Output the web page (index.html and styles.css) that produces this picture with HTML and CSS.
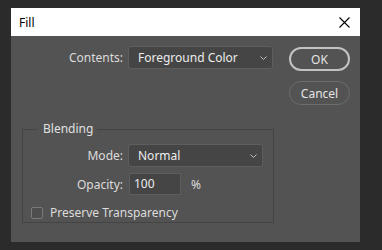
FILE: index.html
```html
<!DOCTYPE html>
<html lang="en">

<head>
    <meta charset="UTF-8">
    <meta name="viewport" content="width=device-width, initial-scale=1.0">
    <title>Fill</title>
    <link rel="stylesheet" href="styles.css">
</head>

<body>
    <div class="dialog">
        <div class="titlebar">
            <span class="title">Fill</span>
            <svg class="close" width="11" height="11" viewBox="0 0 11 11">
                <path d="M0.5 0.5 L10.5 10.5 M10.5 0.5 L0.5 10.5" stroke="#000" stroke-width="1.1" fill="none" />
            </svg>
        </div>

        <div class="content">
            <div class="form">
                <div class="row contents-row">
                    <label class="label">Contents:</label>
                    <div class="select contents-select">
                        <span>Foreground Color</span>
                        <svg class="chevron" width="7" height="4" viewBox="0 0 7 4">
                            <path d="M0.5 0.5 L3.5 3.5 L6.5 0.5" stroke="#bdbdbd" stroke-width="1" fill="none" />
                        </svg>
                    </div>
                </div>

                <fieldset class="group">
                    <legend>Blending</legend>
                    <div class="row">
                        <label class="label">Mode:</label>
                        <div class="select mode-select">
                            <span>Normal</span>
                            <svg class="chevron" width="7" height="4" viewBox="0 0 7 4">
                                <path d="M0.5 0.5 L3.5 3.5 L6.5 0.5" stroke="#bdbdbd" stroke-width="1" fill="none" />
                            </svg>
                        </div>
                    </div>
                    <div class="row opacity-row">
                        <label class="label">Opacity:</label>
                        <div class="input">100</div>
                        <span class="unit">%</span>
                    </div>
                    <div class="check-row">
                        <span class="checkbox"></span>
                        <span>Preserve Transparency</span>
                    </div>
                </fieldset>
            </div>

            <div class="buttons">
                <button class="btn btn-default">OK</button>
                <button class="btn">Cancel</button>
            </div>
        </div>
    </div>
</body>

</html>
```

FILE: styles.css
```css
body {
    margin: 0;
    padding: 8px 0 0 11px;
    background: #2b2b2b;
    font-family: "Noto Sans", "Open Sans", sans-serif;
    font-size: 12px;
    height: 250px;
    box-sizing: border-box;
    overflow: hidden;
}

.dialog {
    width: 349px;
    height: 234px;
    background: #535353;
    color: #dcdcdc;
}

.titlebar {
    height: 28px;
    background: #ffffff;
    display: flex;
    align-items: center;
    justify-content: space-between;
    padding: 0 10px 0 8px;
    color: #000;
}

.title {
    font-size: 12px;
}

.close {
    display: block;
}

.content {
    display: flex;
    padding-top: 10px;
}

.form {
    width: 262px;
}

.row {
    display: flex;
    align-items: center;
}

.label {
    width: 117px;
    text-align: right;
    padding-right: 5px;
    box-sizing: border-box;
}

.select {
    height: 23px;
    box-sizing: border-box;
    background: #454545;
    border: 1px solid #5e5e5e;
    border-radius: 3px;
    display: flex;
    align-items: center;
    justify-content: space-between;
    padding: 0 5px 0 9px;
    color: #ececec;
}

.contents-select {
    width: 145px;
}

.mode-select {
    width: 135px;
}

.chevron {
    display: block;
}

.group {
    margin: 52px 0 0 11px;
    padding: 7px 0 0 0;
    border: 1px solid #444444;
    height: 102px;
    box-sizing: border-box;
    width: 252px;
}

.group legend {
    margin-left: 14px;
    padding: 0 4px 0 6px;
    line-height: 16px;
    color: #e0e0e0;
}

.group .label {
    width: 105px;
}

.opacity-row {
    margin-top: 6px;
}

.input {
    width: 52px;
    height: 22px;
    box-sizing: border-box;
    background: #454545;
    border: 1px solid #5e5e5e;
    padding-left: 4px;
    line-height: 20px;
    color: #ececec;
    margin-left: 1px;
}

.unit {
    margin-left: 10px;
}

.check-row {
    display: flex;
    align-items: center;
    margin: 9px 0 0 8px;
    gap: 7px;
}

.checkbox {
    width: 12px;
    height: 12px;
    box-sizing: border-box;
    border: 1px solid #7a7a7a;
    border-radius: 2px;
    background: #4e4e4e;
}

.buttons {
    display: flex;
    flex-direction: column;
    gap: 10px;
    margin-left: 16px;
    padding-top: 1px;
}

.btn {
    width: 61px;
    height: 24px;
    border-radius: 12px;
    background: #535353;
    border: 1px solid #6c6c6c;
    color: #e4e4e4;
    font-family: inherit;
    font-size: 12px;
    padding: 0;
}

.btn-default {
    border: 2px solid #c2c2c2;
}
```
